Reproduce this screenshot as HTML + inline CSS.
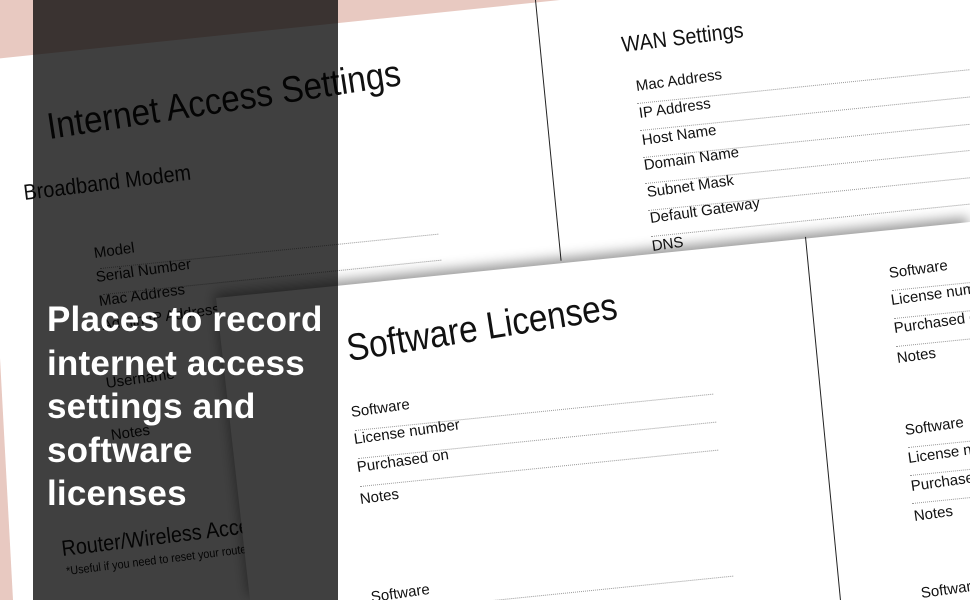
<!DOCTYPE html>
<html><head><meta charset="utf-8"><style>
html,body{margin:0;padding:0;width:970px;height:600px;overflow:hidden}
body{position:relative;background:#e8c9c1;font-family:"Liberation Sans",sans-serif}
.sheet{position:absolute;left:0;top:0;width:970px;height:600px;background:#fff}
.t{position:absolute;white-space:nowrap;color:#111;transform-origin:0 100%;transform:rotate(-8deg);line-height:1}
.d{position:absolute;height:0;border-top:1px dotted #999;transform-origin:0 0;transform:rotate(-5.8deg)}
.v{position:absolute;width:0;border-left:1.5px solid #222;transform-origin:0 0;transform:rotate(-5.6deg)}
.ov{position:absolute;left:33px;top:0;width:305px;height:600px;background:rgba(0,0,0,0.75)}
.h{position:absolute;left:47px;top:298px;color:#fff;font-weight:bold;font-size:35px;line-height:43.5px;letter-spacing:0.2px}
.wrap{position:absolute;left:0;top:0;width:970px;height:600px;filter:drop-shadow(-2px -5px 6px rgba(0,0,0,0.4))}
</style></head><body>
<div class="sheet" style="clip-path:polygon(-16px 60px,560px 0,970px 0,970px 600px,13px 600px)"></div>
<div class="v" style="left:535px;top:0;height:262px"></div>

<div class="t" style="left:50px;top:108px;font-size:37px;transform:rotate(-8.7deg) scaleX(0.9)">Internet Access Settings</div>
<div class="t" style="left:25px;top:182px;font-size:22px;transform:rotate(-7deg) scaleX(0.9)">Broadband Modem</div>
<div class="t" style="left:95px;top:246px;font-size:15px">Model</div>
<div class="t" style="left:97px;top:270px;font-size:15px">Serial Number</div>
<div class="t" style="left:100px;top:294px;font-size:15px">Mac Address</div>
<div class="t" style="left:103px;top:318px;font-size:15px">Admin IP Address</div>
<div class="t" style="left:107px;top:376px;font-size:15px">Username</div>
<div class="t" style="left:112px;top:428px;font-size:15px">Notes</div>
<div class="t" style="left:63px;top:538px;font-size:22px;transform:rotate(-7deg) scaleX(0.9)">Router/Wireless Access Point</div>
<div class="t" style="left:67px;top:565px;font-size:12px;transform:rotate(-7deg) scaleX(0.9)">*Useful if you need to reset your router</div>
<div class="d" style="left:100px;top:268px;width:340px"></div>
<div class="d" style="left:103px;top:294px;width:340px"></div>

<div class="t" style="left:623px;top:34px;font-size:22px;transform:rotate(-7deg) scaleX(0.9)">WAN Settings</div>
<div class="t" style="left:637px;top:79px;font-size:15px">Mac Address</div>
<div class="t" style="left:640px;top:106px;font-size:15px">IP Address</div>
<div class="t" style="left:643px;top:133px;font-size:15px">Host Name</div>
<div class="t" style="left:645px;top:158px;font-size:15px">Domain Name</div>
<div class="t" style="left:648px;top:185px;font-size:15px">Subnet Mask</div>
<div class="t" style="left:651px;top:211px;font-size:15px">Default Gateway</div>
<div class="t" style="left:653px;top:239px;font-size:15px">DNS</div>
<div class="d" style="left:637px;top:103px;width:340px"></div>
<div class="d" style="left:640px;top:130px;width:340px"></div>
<div class="d" style="left:643px;top:157px;width:340px"></div>
<div class="d" style="left:645px;top:183px;width:340px"></div>
<div class="d" style="left:648px;top:210px;width:340px"></div>
<div class="d" style="left:651px;top:236px;width:340px"></div>

<div class="wrap"><div class="sheet" style="clip-path:polygon(216px 298px,970px 222px,970px 600px,250px 600px)"></div></div>
<div class="v" style="left:805px;top:237px;height:370px;transform:rotate(-5.5deg)"></div>

<div class="t" style="left:350px;top:330px;font-size:38px;transform:rotate(-9deg) scaleX(0.88)">Software Licenses</div>
<div class="t" style="left:352px;top:405px;font-size:15px">Software</div>
<div class="t" style="left:355px;top:432px;font-size:15px">License number</div>
<div class="t" style="left:358px;top:460px;font-size:15px">Purchased on</div>
<div class="t" style="left:361px;top:492px;font-size:15px">Notes</div>
<div class="t" style="left:372px;top:590px;font-size:15px">Software</div>
<div class="d" style="left:355px;top:430px;width:360px"></div>
<div class="d" style="left:358px;top:458px;width:360px"></div>
<div class="d" style="left:360px;top:486px;width:360px"></div>
<div class="d" style="left:375px;top:612px;width:360px"></div>

<div class="t" style="left:890px;top:266px;font-size:15px">Software</div>
<div class="t" style="left:892px;top:293px;font-size:15px">License number</div>
<div class="t" style="left:895px;top:321px;font-size:15px">Purchased on</div>
<div class="t" style="left:898px;top:351px;font-size:15px">Notes</div>
<div class="d" style="left:892px;top:290px;width:100px"></div>
<div class="d" style="left:894px;top:318px;width:100px"></div>
<div class="d" style="left:896px;top:346px;width:100px"></div>
<div class="t" style="left:906px;top:423px;font-size:15px">Software</div>
<div class="t" style="left:909px;top:451px;font-size:15px">License number</div>
<div class="t" style="left:912px;top:479px;font-size:15px">Purchased on</div>
<div class="t" style="left:915px;top:509px;font-size:15px">Notes</div>
<div class="d" style="left:908px;top:447px;width:100px"></div>
<div class="d" style="left:910px;top:475px;width:100px"></div>
<div class="d" style="left:912px;top:503px;width:100px"></div>
<div class="t" style="left:922px;top:586px;font-size:15px">Software</div>

<div class="ov"></div>
<div class="h">Places to record<br>internet access<br>settings and<br>software<br>licenses</div>
</body></html>
